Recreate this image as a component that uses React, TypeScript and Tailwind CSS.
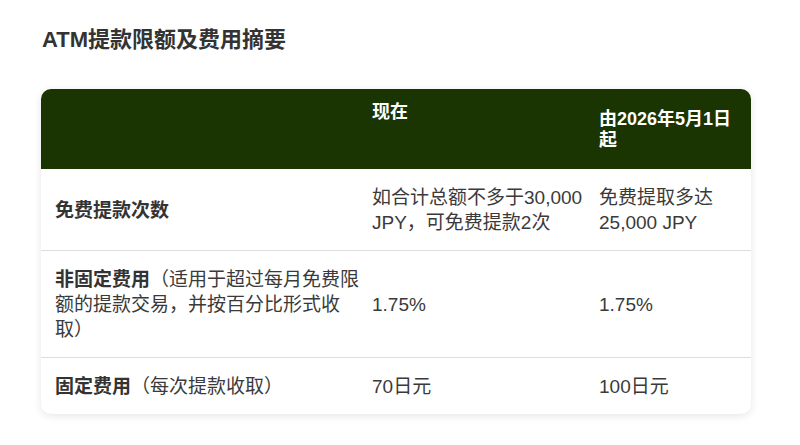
const font = { fontFamily: '"Liberation Sans", "Noto Sans CJK SC", sans-serif' };

const rows = [
  {
    label: "免费提款次数",
    note: "",
    now: "如合计总额不多于30,000 JPY，可免费提款2次",
    later: "免费提取多达 25,000 JPY",
  },
  {
    label: "非固定费用",
    note: "（适用于超过每月免费限额的提款交易，并按百分比形式收取）",
    now: "1.75%",
    later: "1.75%",
  },
  {
    label: "固定费用",
    note: "（每次提款收取）",
    now: "70日元",
    later: "100日元",
  },
];

export default function App() {
  return (
    <div className="min-h-[445px] w-[800px] bg-white" style={font}>
      <h1 className="ml-[42px] pt-[26px] text-[22px] font-bold leading-[28px] text-[#333]">
        ATM提款限额及费用摘要
      </h1>
      <div className="ml-[41px] mt-[35px] w-[710px] overflow-hidden rounded-[10px] bg-white shadow-[0_2px_8px_rgba(0,0,0,0.1)]">
        <div className="grid h-[80px] grid-cols-[320px_227px_1fr] bg-[#1b3502] text-[18px] font-bold text-white">
          <div />
          <div className="pl-[11px] pt-[13px] leading-[21px]">现在</div>
          <div className="pl-[11px] pr-[11px] pt-[20px] leading-[21px]">由2026年5月1日起</div>
        </div>
        {rows.map((r, i) => (
          <div
            key={r.label}
            className={`grid grid-cols-[320px_227px_1fr] items-center text-[19px] leading-[25px] text-[#3a3a3a] ${
              i > 0 ? "border-t border-[#dedede]" : ""
            }`}
          >
            <div className="pb-[15px] pl-[14px] pt-4">
              <span className="font-bold text-[#333]">{r.label}</span>
              {r.note}
            </div>
            <div className="pb-[15px] pl-[11px] pt-4">{r.now}</div>
            <div className="pb-[15px] pl-[11px] pr-[11px] pt-4">{r.later}</div>
          </div>
        ))}
      </div>
    </div>
  );
}
